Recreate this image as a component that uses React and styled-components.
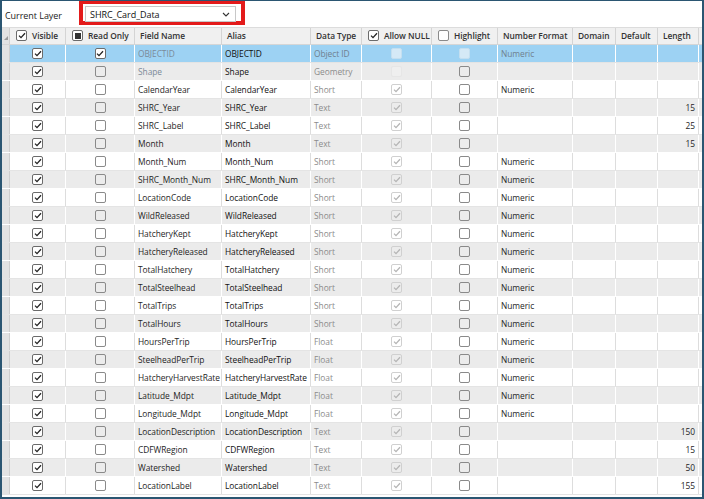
import React from "react";
import styled, { createGlobalStyle, css } from "styled-components";

const GlobalStyle = createGlobalStyle`
	html, body {
		margin: 0;
		padding: 0;
		background: #ffffff;
	}
	* {
		box-sizing: border-box;
	}
`;

const COLS = "8px 56px 69px 87px 89px 51px 70px 66px 75px 43px 42px 41px 1fr";

const fields = [
	{ name: "OBJECTID", type: "Object ID", fmt: "Numeric", locked: true, readOnly: true },
	{ name: "Shape", type: "Geometry", locked: true, noNull: true },
	{ name: "CalendarYear", type: "Short", fmt: "Numeric" },
	{ name: "SHRC_Year", type: "Text", len: 15 },
	{ name: "SHRC_Label", type: "Text", len: 25 },
	{ name: "Month", type: "Text", len: 15 },
	{ name: "Month_Num", type: "Short", fmt: "Numeric" },
	{ name: "SHRC_Month_Num", type: "Short", fmt: "Numeric" },
	{ name: "LocationCode", type: "Short", fmt: "Numeric" },
	{ name: "WildReleased", type: "Short", fmt: "Numeric" },
	{ name: "HatcheryKept", type: "Short", fmt: "Numeric" },
	{ name: "HatcheryReleased", type: "Short", fmt: "Numeric" },
	{ name: "TotalHatchery", type: "Short", fmt: "Numeric" },
	{ name: "TotalSteelhead", type: "Short", fmt: "Numeric" },
	{ name: "TotalTrips", type: "Short", fmt: "Numeric" },
	{ name: "TotalHours", type: "Short", fmt: "Numeric" },
	{ name: "HoursPerTrip", type: "Float", fmt: "Numeric" },
	{ name: "SteelheadPerTrip", type: "Float", fmt: "Numeric" },
	{ name: "HatcheryHarvestRate", type: "Float", fmt: "Numeric" },
	{ name: "Latitude_Mdpt", type: "Float", fmt: "Numeric" },
	{ name: "Longitude_Mdpt", type: "Float", fmt: "Numeric" },
	{ name: "LocationDescription", type: "Text", len: 150 },
	{ name: "CDFWRegion", type: "Text", len: 15 },
	{ name: "Watershed", type: "Text", len: 50 },
	{ name: "LocationLabel", type: "Text", len: 155 },
];

const Frame = styled.div`
	width: 704px;
	height: 499px;
	border: 2px solid #2b5672;
	border-top-width: 1px;
	background: #fff;
	font-family: "Open Sans", "Noto Sans", sans-serif;
	font-size: 8.4px;
	letter-spacing: -0.05px;
	color: #1e1e1e;
	overflow: hidden;
	display: flex;
	flex-direction: column;
`;

const Toolbar = styled.div`
	height: 27px;
	display: flex;
	align-items: flex-start;
	border-bottom: 1px solid #dcdcdc;
`;

const ToolLabel = styled.span`
	width: 77px;
	padding: 8px 0 0 3px;
	font-size: 9px;
	color: #222;
`;

const Highlight = styled.div`
	width: 166px;
	height: 25px;
	margin-top: -1px;
	border: 4px solid #e31b1b;
	padding: 2px 5px 2px 2px;
`;

const Combo = styled.div`
	height: 16px;
	border: 1px solid #c8c8c8;
	display: flex;
	align-items: center;
	justify-content: space-between;
	padding: 0 5px 0 4px;
	font-size: 9px;
	color: #111;
`;

const Row = styled.div`
	display: grid;
	grid-template-columns: ${COLS};
	height: ${(p) => (p.$header ? "17px" : "18px")};
	background: ${(p) =>
		p.$header ? "#f0f0f0" : p.$selected ? "#9dd2f3" : p.$alt ? "#ebebeb" : "#ffffff"};
	border-bottom: 1px solid ${(p) => (p.$header ? "#d6d6d6" : p.$alt ? "#ffffff" : "#e4e4e4")};
`;

const Cell = styled.div`
	display: flex;
	align-items: center;
	padding: 0 3px 1px;
	white-space: nowrap;
	overflow: hidden;
	border-right: 1px solid ${(p) => p.$line || "#dddddd"};
	color: ${(p) => p.$color || "inherit"};
	justify-content: ${(p) => (p.$center ? "center" : p.$right ? "flex-end" : "flex-start")};
`;

const HeadCell = styled(Cell)`
	font-weight: 600;
	color: #333;
	gap: 5px;
	padding-left: ${(p) => (p.$boxed ? "6px" : "5px")};
	border-right-color: #d4d4d4;
`;

const RowHead = styled.div`
	background: #e3e3e3;
	border-right: 1px solid #cfcfcf;
	display: flex;
	align-items: flex-end;
	justify-content: center;
`;

const Corner = styled.span`
	width: 0;
	height: 0;
	margin-bottom: 4px;
	border-left: 4px solid transparent;
	border-bottom: 4px solid #9a9a9a;
`;

const boxColors = {
	on: css`
		border-color: #6b6b6b;
		background: #fff;
		color: #222;
	`,
	off: css`
		border-color: #8a8a8a;
		background: ${(p) => (p.$alt ? "#ececec" : "#fff")};
	`,
	dim: css`
		border-color: #d0d0d0;
		background: ${(p) => (p.$alt ? "#ececec" : "#fff")};
		color: #b5b5b5;
	`,
	faint: css`
		border-color: #e6e6e6;
		background: #efefef;
	`,
	blank: css`
		border-color: #c4dff0;
		background: #d5e9f6;
	`,
	mixed: css`
		border-color: #6b6b6b;
		background: #fff;
	`,
};

const Box = styled.span`
	width: 11px;
	height: 11px;
	border: 1px solid;
	border-radius: 2px;
	display: inline-flex;
	align-items: center;
	justify-content: center;
	flex-shrink: 0;
	${(p) => boxColors[p.$kind]}
`;

const Fill = styled.span`
	width: 6px;
	height: 6px;
	background: #333;
`;

const Check = ({ kind, alt }) => (
	<Box $kind={kind} $alt={alt}>
		{(kind === "on" || kind === "dim") && (
			<svg width="8" height="7" viewBox="0 0 8 7">
				<path d="M1 3.6 L3 5.6 L7 1.2" fill="none" stroke="currentColor" strokeWidth="1.3" />
			</svg>
		)}
		{kind === "mixed" && <Fill />}
	</Box>
);

const Chevron = () => (
	<svg width="8" height="5" viewBox="0 0 8 5">
		<path d="M1 1 L4 4 L7 1" fill="none" stroke="#333" strokeWidth="1.1" />
	</svg>
);

const App = () => {
	return (
		<>
			<GlobalStyle />
			<Frame>
				<Toolbar>
					<ToolLabel>Current Layer</ToolLabel>
					<Highlight>
						<Combo>
							SHRC_Card_Data
							<Chevron />
						</Combo>
					</Highlight>
				</Toolbar>

				<Row $header>
					<RowHead>
						<Corner />
					</RowHead>
					<HeadCell $boxed>
						<Check kind="on" />
						Visible
					</HeadCell>
					<HeadCell $boxed>
						<Check kind="mixed" />
						Read Only
					</HeadCell>
					<HeadCell>Field Name</HeadCell>
					<HeadCell>Alias</HeadCell>
					<HeadCell>Data Type</HeadCell>
					<HeadCell $boxed>
						<Check kind="on" />
						Allow NULL
					</HeadCell>
					<HeadCell $boxed>
						<Check kind="off" />
						Highlight
					</HeadCell>
					<HeadCell>Number Format</HeadCell>
					<HeadCell>Domain</HeadCell>
					<HeadCell>Default</HeadCell>
					<HeadCell>Length</HeadCell>
					<HeadCell />
				</Row>

				{fields.map((f, i) => {
					const selected = i === 0;
					const alt = i % 2 === 1;
					const line = selected || alt ? "#ffffff" : "#dddddd";
					let nullKind = "dim";
					if (selected) nullKind = "blank";
					else if (f.noNull) nullKind = "faint";
					return (
						<Row key={f.name} $selected={selected} $alt={alt}>
							<RowHead />
							<Cell $center $line={line}>
								<Check kind="on" alt={alt} />
							</Cell>
							<Cell $center $line={line}>
								<Check kind={f.readOnly ? "on" : "off"} alt={alt} />
							</Cell>
							<Cell $line={line} $color={f.locked ? "#7b8a99" : undefined}>
								{f.name}
							</Cell>
							<Cell $line={line} $color="#111">
								{f.name}
							</Cell>
							<Cell $line={line} $color={selected ? "#6f7f8e" : "#8c8c8c"}>
								{f.type}
							</Cell>
							<Cell $center $line={line}>
								<Check kind={nullKind} alt={alt} />
							</Cell>
							<Cell $center $line={line}>
								<Check kind={selected ? "blank" : "off"} alt={alt} />
							</Cell>
							<Cell $line={line} $color={selected ? "#6f7f8e" : undefined}>
								{f.fmt || ""}
							</Cell>
							<Cell $line={line} />
							<Cell $line={line} />
							<Cell $right $line={line}>
								{f.len || ""}
							</Cell>
							<Cell $line={line} />
						</Row>
					);
				})}
			</Frame>
		</>
	);
};

export default App;
